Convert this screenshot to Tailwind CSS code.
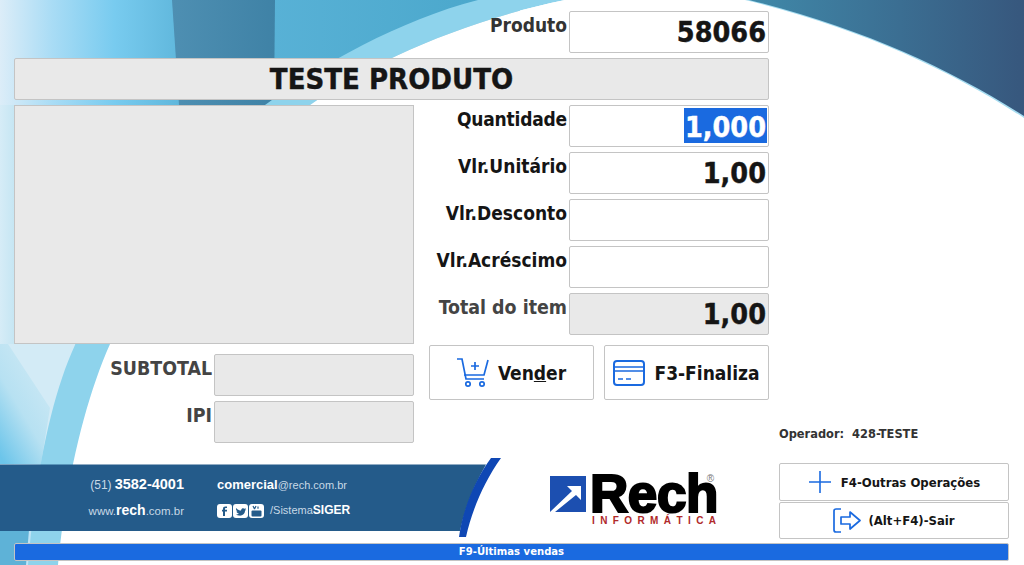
<!DOCTYPE html>
<html lang="pt-BR">
<head>
<meta charset="utf-8">
<script src="https://cdn.jsdelivr.net/npm/@tailwindcss/browser@4"></script>
</head>
<body class="m-0 bg-white">
<div class="relative w-[1024px] h-[565px] overflow-hidden bg-white font-['DejaVu_Sans_Condensed','DejaVu_Sans',sans-serif] font-bold text-[#151515]">
  <svg class="absolute left-0 top-0" width="1024" height="565" viewBox="0 0 1024 565" aria-hidden="true">
    <defs>
      <linearGradient id="sky" x1="0" x2="1" y1="0" y2="0">
        <stop offset="0" stop-color="#dcedf8"/><stop offset="0.1" stop-color="#a9dcf5"/><stop offset="0.22" stop-color="#78cbef"/><stop offset="0.36" stop-color="#5db5da"/><stop offset="1" stop-color="#49a6ca"/>
      </linearGradient>
      <linearGradient id="left" x1="0" x2="1" y1="0" y2="0">
        <stop offset="0" stop-color="#d6ecf7"/><stop offset="1" stop-color="#c6e6f3"/>
      </linearGradient>
      <linearGradient id="dark" x1="0" x2="1" y1="0" y2="0">
        <stop offset="0" stop-color="#4089a9"/><stop offset="0.55" stop-color="#3b6e92"/><stop offset="1" stop-color="#37577d"/>
      </linearGradient>
      <linearGradient id="col" x1="0" x2="1" y1="0" y2="0">
        <stop offset="0" stop-color="#4e8fb2"/><stop offset="1" stop-color="#3f82a6"/>
      </linearGradient>
      <linearGradient id="facet" x1="0.8" y1="0" x2="0.1" y2="1">
        <stop offset="0" stop-color="#d0eaf5"/><stop offset="0.55" stop-color="#b7e1f2"/><stop offset="1" stop-color="#6cc5ea"/>
      </linearGradient>
    </defs>
    <rect x="0" y="0" width="520" height="565" fill="url(#sky)"/>
    <path d="M172 0H275L274 105H179Z" fill="url(#col)"/>
    <path d="M0 105H14V565H0Z" fill="url(#left)"/>
    <path d="M0 344H76C60 385 48 425 41 464H0Z" fill="#d3ebf6"/>
    <path d="M8 344L50 408L41 464H0V344Z" fill="url(#facet)"/>
    <path d="M0 530H29L26 565H0Z" fill="#5eb2d7"/>
    <path d="M478 0C400 20 320 65 265 105C170 185 105 270 75 345C52 395 36 470 28 565H58C66 480 85 400 110 344C160 240 240 155 310 105C365 65 465 20 565 0Z" fill="#8ed3ec"/>
    <path d="M565 0H745C860 28 950 70 1024 118V565H58C66 480 85 400 110 344C160 240 240 155 310 105C365 65 465 20 565 0Z" fill="#ffffff"/>
    <path d="M745 0C860 28 950 70 1024 118V0Z" fill="#a5dcf0"/>
    <path d="M749 0C862 28 952 70 1024 116V0Z" fill="url(#dark)"/>
    <path d="M0 464.5H486C474 485 465 508 460 531H0Z" fill="#245b8a"/>
    <path d="M491 458H501C484 482 472 510 466 537H459C463 508 475 480 491 458Z" fill="#0f47b4"/>
  </svg>

  <div class="relative flex flex-col pl-[14px] pt-[11px] w-[1009px]">
    <div class="flex gap-[10px] h-[528px]">
      <div class="flex flex-col w-[755px]">
        <div class="flex justify-end items-start gap-[2px] h-[42px]">
          <span class="text-[19px] leading-[28px] text-[#333]">Produto</span>
          <div class="w-[200px] h-[42px] bg-white border border-[#c4c4c4] rounded-[2px] flex items-center justify-end pr-[2px] pt-[2px] text-[28.5px] [-webkit-text-stroke:0.4px_#151515]">58066</div>
        </div>
        <div class="mt-[5px] h-[42px] bg-[#e9e9e9] border border-[#c4c4c4] rounded-[2px] flex items-center justify-center pt-[2px] text-[29px] [-webkit-text-stroke:0.4px_#151515]">TESTE PRODUTO</div>
        <div class="mt-[5px] flex h-[338px]">
          <div class="w-[400px] flex flex-col">
            <div class="h-[239px] bg-[#e9e9e9] border border-[#c4c4c4]"></div>
            <div class="mt-[10px] flex justify-end gap-[2px] h-[42px]">
              <span class="text-[19.4px] leading-[29px] text-[#444]">SUBTOTAL</span>
              <div class="w-[200px] bg-[#e9e9e9] border border-[#c4c4c4] rounded-[2px]"></div>
            </div>
            <div class="mt-[5px] flex justify-end gap-[2px] h-[42px]">
              <span class="text-[19.4px] leading-[29px] text-[#444]">IPI</span>
              <div class="w-[200px] bg-[#e9e9e9] border border-[#c4c4c4] rounded-[2px]"></div>
            </div>
          </div>
          <div class="flex-1 flex flex-col items-end">
            <div class="flex gap-[2px] h-[42px]">
              <span class="text-[19px] leading-[29px] tracking-[-0.2px]">Quantidade</span>
              <div class="w-[200px] bg-white border border-[#c4c4c4] rounded-[2px] flex items-center justify-end pr-[1px] text-[28.5px]"><span class="bg-[#1a6ae0] text-white h-[35px] -mt-[1px] leading-[39px] px-[1px] [-webkit-text-stroke:0.4px_#fff]">1,000</span></div>
            </div>
            <div class="mt-[5px] flex gap-[2px] h-[42px]">
              <span class="text-[19px] leading-[29px]">Vlr.Unitário</span>
              <div class="w-[200px] bg-white border border-[#c4c4c4] rounded-[2px] flex items-center justify-end pr-[2px] pt-[2px] text-[28.5px] [-webkit-text-stroke:0.4px_#151515]">1,00</div>
            </div>
            <div class="mt-[5px] flex gap-[2px] h-[42px]">
              <span class="text-[19px] leading-[29px]">Vlr.Desconto</span>
              <div class="w-[200px] bg-white border border-[#c4c4c4] rounded-[2px]"></div>
            </div>
            <div class="mt-[5px] flex gap-[2px] h-[42px]">
              <span class="text-[19px] leading-[29px]">Vlr.Acréscimo</span>
              <div class="w-[200px] bg-white border border-[#c4c4c4] rounded-[2px]"></div>
            </div>
            <div class="mt-[5px] flex gap-[2px] h-[42px]">
              <span class="text-[19.4px] leading-[29px] text-[#444]">Total do item</span>
              <div class="w-[200px] bg-[#e9e9e9] border border-[#c4c4c4] rounded-[2px] flex items-center justify-end pr-[2px] pt-[2px] text-[28.5px] [-webkit-text-stroke:0.4px_#151515]">1,00</div>
            </div>
            <div class="mt-[10px] flex gap-[10px]">
              <div class="w-[165px] h-[55px] bg-white border border-[#c4c4c4] rounded-[2px] flex items-center justify-center gap-[8px] pt-[1px] pr-[1px] text-[19px]">
                <svg width="34" height="30" viewBox="0 0 34 30" fill="none" stroke="#1a6ae0" stroke-width="1.7" aria-hidden="true"><path d="M1 1H6L10 21H28"/><path d="M8 17H28L32 2"/><path d="M19 4V12M15 8H23"/><circle cx="12" cy="26" r="2.2"/><circle cx="26" cy="26" r="2.2"/></svg>
                <span>Ven<span class="underline">d</span>er</span>
              </div>
              <div class="w-[165px] h-[55px] bg-white border border-[#c4c4c4] rounded-[2px] flex items-center justify-center gap-[9px] pt-[1px] text-[19px]">
                <svg width="32" height="26" viewBox="0 0 32 26" fill="none" stroke="#1a6ae0" stroke-width="2" aria-hidden="true"><rect x="1" y="1" width="30" height="24" rx="3"/><path d="M1 7H31M1 11H31" stroke-width="1.6"/><path d="M5 19H10M13 19H18" stroke-width="1.6"/></svg>
                <span>F3-Finaliza</span>
              </div>
            </div>
          </div>
        </div>
        <div class="flex mt-[8px] h-[85px]">
          <div class="w-[334px] pl-[76px] pt-[21px] flex gap-[33px] font-['Liberation_Sans',sans-serif] font-normal text-[11px] leading-[25px] text-[#c8d9e6]">
            <div class="flex flex-col items-end w-[94px]">
              <span class="whitespace-nowrap"><span class="text-[12px]">(51)</span> <b class="text-white text-[14.5px]">3582-4001</b></span>
              <span class="whitespace-nowrap text-[11.5px]">www.<b class="text-white text-[14px]">rech</b>.com.br</span>
            </div>
            <div class="flex flex-col">
              <span class="whitespace-nowrap"><b class="text-white text-[13px]">comercial</b>@rech.com.br</span>
              <span class="flex items-center gap-[1px] whitespace-nowrap">
                <svg width="48" height="16" viewBox="0 0 48 16" aria-hidden="true"><rect x="0" y="1" width="15" height="14" rx="3" fill="#fff"/><path d="M8 13V8.500H10V6.800H8V5.800C8 5.200 8.300 5 9 5H10V3.400H8.500C6.800 3.400 6 4.300 6 5.700V6.800H5V8.500H6V13Z" fill="#245b8a"/><rect x="16" y="1" width="15" height="14" rx="3" fill="#fff"/><path d="M19 5C21 7 22.500 7.500 24 7.600C24 5.500 26.300 4.500 27.500 5.800L29 5.200L28.200 6.700L29.200 6.500C28.800 7.100 28.400 7.500 28 7.800C28 11 25 13.200 22 12.600C21 12.500 20 12 19 11.500C20.200 11.500 21.200 11.200 22 10.500C20.500 10.300 19.700 9.500 19.400 8.500H20.500C19.400 7.900 18.800 6.500 19 5Z" fill="#245b8a"/><rect x="32" y="1" width="15" height="14" rx="3" fill="#fff"/><rect x="34.500" y="7.500" width="10" height="6" rx="1" fill="#245b8a"/><path d="M36 3L37.500 6M39 3L37.500 6M41 3.500V5.800" stroke="#245b8a" stroke-width="1.200" fill="none"/></svg>
                <span class="ml-[4px]">/Sistema<b class="text-white text-[12px]">SIGER</b></span>
              </span>
            </div>
          </div>
          <div class="ml-[202px] mt-[25px] flex flex-col w-[170px]">
            <div class="flex items-start gap-[4px] h-[36px]">
              <svg width="36" height="36" viewBox="0 0 36 36" class="shrink-0" aria-hidden="true"><rect width="36" height="36" fill="#1c4fb0"/><path d="M0 36L22 15L17 10H31V24L26 19L5 36Z" fill="#fff"/></svg>
              <span class="relative font-['Liberation_Sans',sans-serif] text-[53px] leading-[36px] tracking-[-0.4px] text-black [-webkit-text-stroke:2.2px_black]">Rech<span class="absolute right-[4px] top-[-2px] text-[10px] leading-[10px] tracking-normal font-normal text-[#777] [-webkit-text-stroke:0]">®</span></span>
            </div>
            <div class="ml-[42px] mt-[3px] font-['Liberation_Sans',sans-serif] text-[10px] leading-[12px] tracking-[5.4px] text-[#b02a2a] whitespace-nowrap">INFORMÁTICA</div>
          </div>
        </div>
      </div>
      <div class="w-[230px] flex flex-col pt-[415px]">
        <div class="h-[14px] text-[12.7px] leading-[15px] text-[#333] whitespace-pre">Operador:  428-TESTE</div>
        <div class="mt-[23px] h-[38px] bg-white border border-[#c4c4c4] rounded-[2px] flex items-center justify-center gap-[9px] pt-[1px] text-[13px]">
          <svg width="24" height="24" viewBox="0 0 24 24" fill="none" stroke="#1a6ae0" stroke-width="1.600" aria-hidden="true"><path d="M12 1V23M1 12H23"/></svg>
          <span>F4-Outras Operações</span>
        </div>
        <div class="mt-[1px] h-[38px] bg-white border border-[#c4c4c4] rounded-[2px] flex items-center justify-center gap-[7px] text-[13px]">
          <svg width="28" height="25" viewBox="0 0 28 25" fill="none" stroke="#1a6ae0" stroke-width="1.700" aria-hidden="true"><path d="M8 1H3C1.800 1 1 1.800 1 3V22C1 23.200 1.800 24 3 24H8"/><path d="M8 9H17V4L27 12.500L17 21V16H8Z" stroke-linejoin="round"/></svg>
          <span>(Alt+F4)-Sair</span>
        </div>
      </div>
    </div>
    <div class="mt-[4px] h-[18px] bg-[#1a6ae0] border border-[#c4c4c4] rounded-[2px] flex items-center justify-center pt-[1px] text-[11.2px] text-white">F9-Últimas vendas</div>
  </div>
</div>
</body>
</html>
